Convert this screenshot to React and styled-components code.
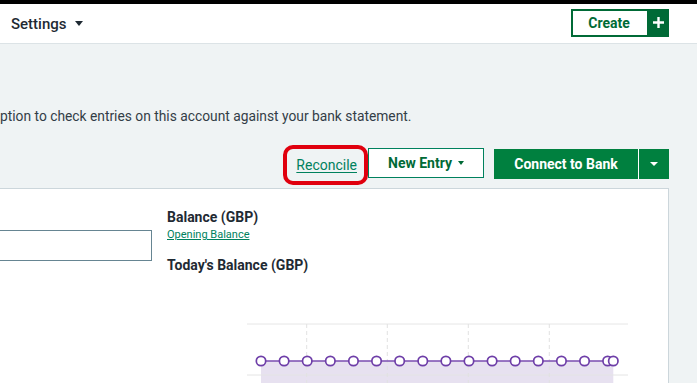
import React from "react";
import styled, { createGlobalStyle } from "styled-components";

const Global = createGlobalStyle`
  html, body { margin: 0; padding: 0; }
  body {
    font-family: Roboto, "Liberation Sans", Arial, sans-serif;
    background: #eff3f4;
    color: #1f2a33;
    overflow: hidden;
  }
`;

const Page = styled.div`
  width: 697px;
  min-height: 383px;
  border-top: 4px solid #000;
  box-sizing: border-box;
`;

const Header = styled.header`
  height: 39px;
  background: #fff;
  border-bottom: 1px solid #dce3e6;
  display: flex;
  align-items: center;
  justify-content: space-between;
  padding: 0 28px 0 11px;
`;

const Caret = styled.span`
  display: inline-block;
  width: 0;
  height: 0;
  border-left: ${(p) => p.$w / 2}px solid transparent;
  border-right: ${(p) => p.$w / 2}px solid transparent;
  border-top: ${(p) => p.$h}px solid ${(p) => p.$color};
`;

const MenuTitle = styled.button`
  all: unset;
  display: flex;
  align-items: center;
  gap: 8px;
  font-size: 15px;
  font-weight: 500;
  color: #1f2a33;
  cursor: pointer;
`;

const SplitCreate = styled.div`
  display: flex;
  height: 28px;
  margin-top: -2px;
`;

const CreateMain = styled.button`
  all: unset;
  box-sizing: border-box;
  width: 76px;
  border: 2px solid #006a36;
  border-right: none;
  display: flex;
  align-items: center;
  justify-content: center;
  font-size: 14px;
  font-weight: 700;
  color: #006a36;
  padding-right: 2px;
`;

const CreatePlus = styled.button`
  all: unset;
  width: 22px;
  background: #006a36;
  display: flex;
  align-items: center;
  justify-content: center;
`;

const Main = styled.main`
  padding: 63px 28px 0 0;
`;

const Description = styled.p`
  margin: 0;
  font-size: 13.8px;
  line-height: 18px;
  color: #333d47;
`;

const Actions = styled.div`
  margin-top: 23px;
  display: flex;
  justify-content: flex-end;
  align-items: center;
  height: 31px;
`;

const LinkButton = styled.a`
  position: relative;
  font-size: 14px;
  color: #00815d;
  text-decoration: underline;
  text-underline-offset: 2px;
  margin-right: 11px;
  margin-top: 3px;
  cursor: pointer;

  &::after {
    content: "";
    position: absolute;
    left: -13px;
    right: -11px;
    top: -12px;
    bottom: -12px;
    border: 4px solid #e0000e;
    border-radius: 10px;
  }
`;

const OutlineButton = styled.button`
  all: unset;
  box-sizing: border-box;
  height: 30px;
  width: 116px;
  background: #fff;
  border: 1px solid #00815d;
  color: #006a36;
  font-size: 14px;
  font-weight: 700;
  display: flex;
  align-items: center;
  justify-content: center;
  gap: 6px;
  margin-right: 10px;
  margin-top: -1px;
`;

const Split = styled.div`
  display: flex;
  height: 30px;
  background: #00803f;
`;

const PrimaryButton = styled.button`
  all: unset;
  width: 144px;
  display: flex;
  align-items: center;
  justify-content: center;
  color: #fff;
  font-size: 14px;
  font-weight: 700;
  border-right: 1px solid #fff;
`;

const CaretButton = styled.button`
  all: unset;
  width: 30px;
  display: flex;
  align-items: center;
  justify-content: center;
`;

const Card = styled.section`
  margin-top: 9px;
  background: #fff;
  border-top: 1px solid #ccd6db;
  border-right: 1px solid #ccd6db;
  height: 220px;
  display: grid;
  grid-template-columns: 152px 1fr;
  column-gap: 15px;
  padding-top: 19px;
  box-sizing: border-box;
`;

const InputBox = styled.div`
  margin-top: 22px;
  height: 31px;
  box-sizing: border-box;
  border: 1px solid #668592;
  border-left: none;
`;

const Summary = styled.div`
  display: flex;
  flex-direction: column;
`;

const Label = styled.div`
  font-size: 14px;
  font-weight: 700;
  line-height: 18px;
  color: #1f2a33;
  margin-top: ${(p) => p.$mt || 0}px;
`;

const SmallLink = styled.a`
  font-size: 11px;
  line-height: 14px;
  color: #00815d;
  text-decoration: underline;
  margin-top: 2px;
`;

const ChartWrap = styled.div`
  margin-top: 45px;
  margin-left: 80px;
`;

function Chart() {
  const n = 16;
  const xs = Array.from({ length: n }, (_, i) => 14 + i * 23.11);
  xs.push(366.3);
  const y = 42;
  return (
    <svg width="381" height="70" viewBox="0 0 381 70">
      <rect x={14} y={y} width={366.3 - 14} height={30} fill="#e7e1f0" />
      <line x1="0" x2="381" y1="5" y2="5" stroke="#e6e6e6" strokeWidth="1" />
      <line x1="0" x2="381" y1="56" y2="56" stroke="#e4e4e4" strokeWidth="1" />
      {[59.7, 140.3, 221.3, 302.3].map((x) => (
        <line key={x} x1={x} x2={x} y1="5" y2="70" stroke="#e2e2e2" strokeDasharray="4 3" strokeWidth="1" />
      ))}
      <line x1={14} x2={366.3} y1={y} y2={y} stroke="#7a4db0" strokeWidth="1.5" />
      {xs.map((x, i) => (
        <circle key={i} cx={x} cy={y} r="4.7" fill="#fff" stroke="#6e3ea8" strokeWidth="1.7" />
      ))}
    </svg>
  );
}

export default function App() {
  return (
    <>
      <Global />
      <Page>
        <Header>
          <MenuTitle>
            Settings <Caret $w={8} $h={5} $color="#1f2a33" />
          </MenuTitle>
          <SplitCreate>
            <CreateMain>Create</CreateMain>
            <CreatePlus>
              <svg width="13" height="13" viewBox="0 0 13 13">
                <path d="M6.5 1v11M1 6.5h11" stroke="#fff" strokeWidth="2.4" />
              </svg>
            </CreatePlus>
          </SplitCreate>
        </Header>
        <Main>
          <Description>ption to check entries on this account against your bank statement.</Description>
          <Actions>
            <LinkButton>Reconcile</LinkButton>
            <OutlineButton>
              New Entry <Caret $w={7} $h={4} $color="#006a36" />
            </OutlineButton>
            <Split>
              <PrimaryButton>Connect to Bank</PrimaryButton>
              <CaretButton>
                <Caret $w={8} $h={4} $color="#fff" />
              </CaretButton>
            </Split>
          </Actions>
          <Card>
            <InputBox />
            <Summary>
              <Label>Balance (GBP)</Label>
              <SmallLink>Opening Balance</SmallLink>
              <Label $mt={14}>Today's Balance (GBP)</Label>
              <ChartWrap>
                <Chart />
              </ChartWrap>
            </Summary>
          </Card>
        </Main>
      </Page>
    </>
  );
}
